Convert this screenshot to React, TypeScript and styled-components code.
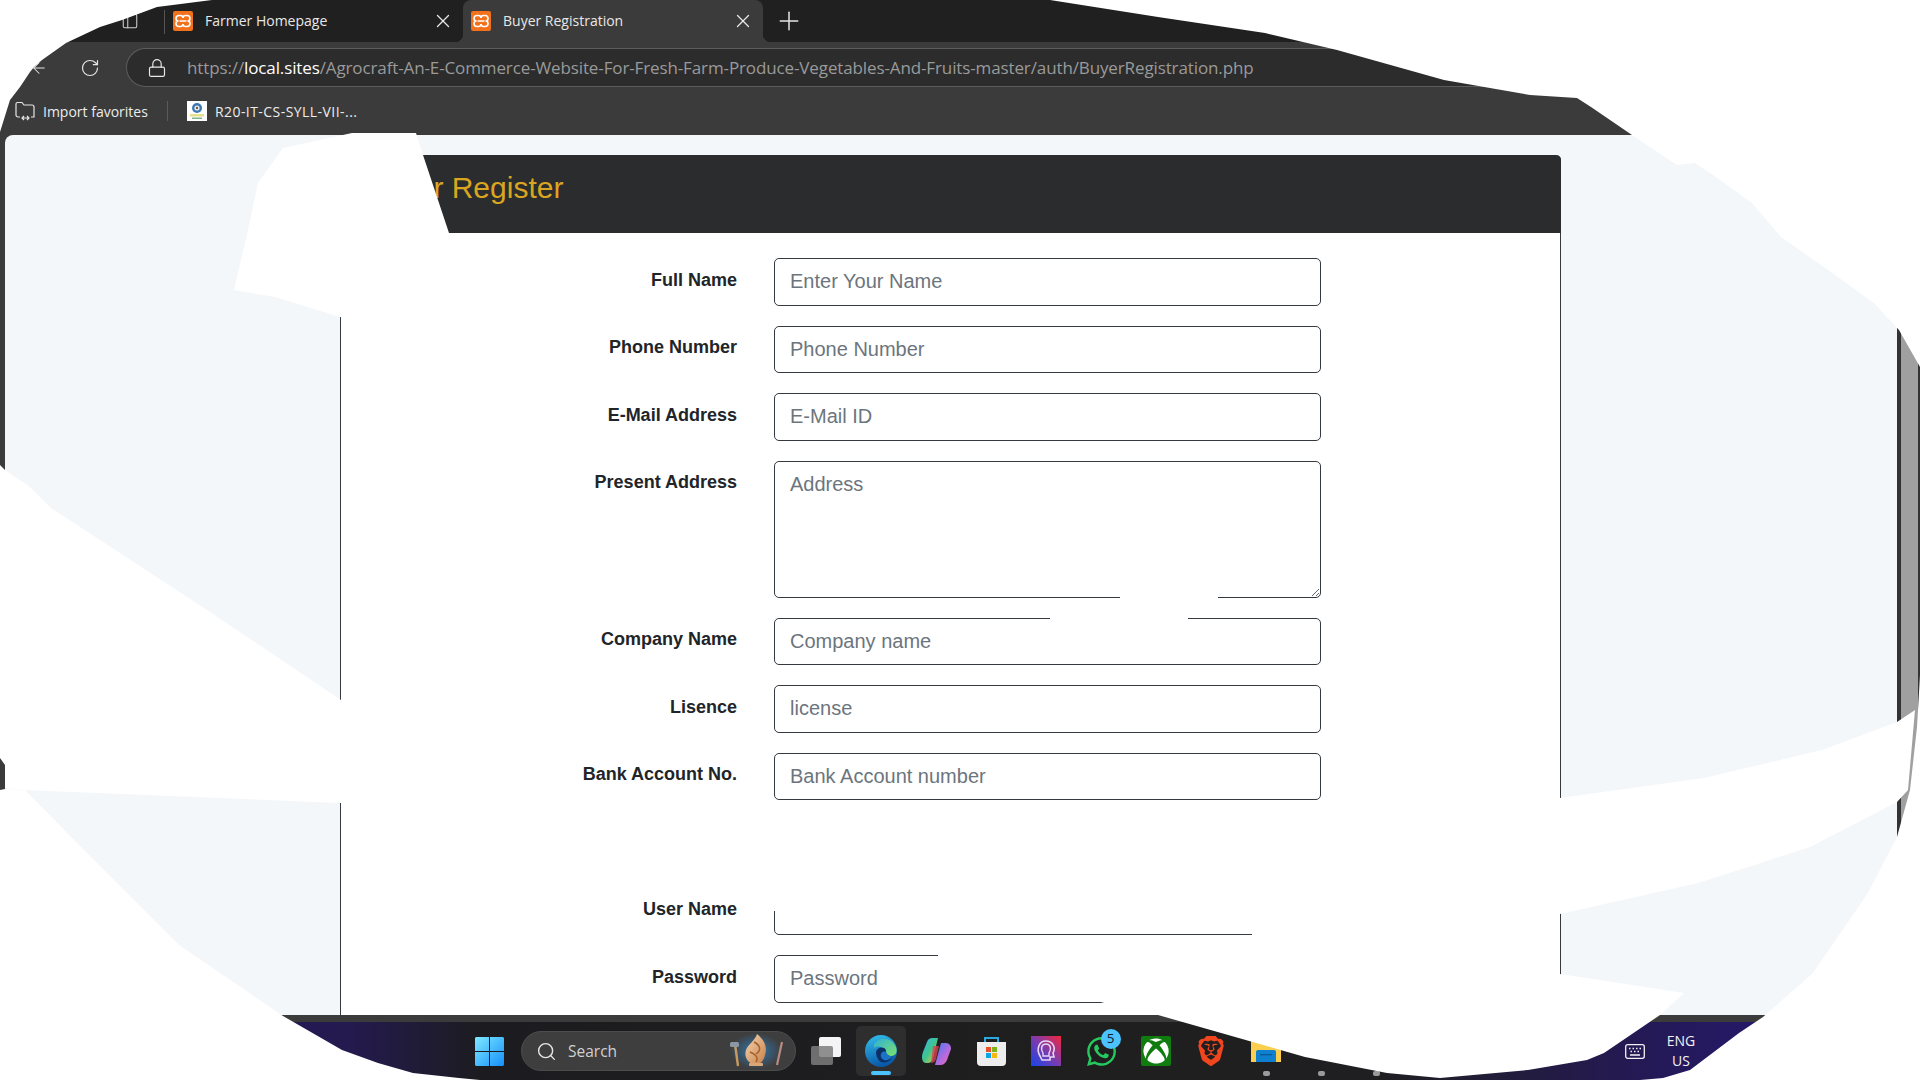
import React from "react";
import styled, { createGlobalStyle } from "styled-components";
import { ArrowLeft, Lock, PanelLeft, Plus, RotateCw, Search, Wifi, X } from "lucide-react";
import { FaWhatsapp, FaXbox } from "react-icons/fa";
import { SiBrave } from "react-icons/si";

const Global = createGlobalStyle`
  html, body { margin: 0; padding: 0; background: #fff; }
  * { box-sizing: border-box; }
`;

const Screen = styled.div`
  position: relative;
  width: 1920px;
  height: 1080px;
  overflow: hidden;
  display: flex;
  flex-direction: column;
  background: #3b3b3b;
  font-family: "Open Sans", "Liberation Sans", sans-serif;
`;

const TabBar = styled.div`
  height: 42px;
  flex: none;
  display: flex;
  align-items: flex-end;
  padding-left: 121px;
  background: #202020;
  color: #e8e8e8;
`;

const SidebarButton = styled.div`
  height: 42px;
  width: 18px;
  display: flex;
  align-items: center;
  color: #d0d0d0;
`;

const TabDivider = styled.div`
  width: 1px;
  height: 24px;
  margin: 0 0 8px 25px;
  background: #555;
`;

const Tab = styled.div<{ $active?: boolean; $w: number }>`
  position: relative;
  width: ${(p) => p.$w}px;
  height: 42px;
  display: flex;
  align-items: center;
  padding: 0 9px 0 8px;
  background: ${(p) => (p.$active ? "#3b3b3b" : "transparent")};
  border-radius: 8px 8px 0 0;
  font-size: 14px;
  &::before, &::after {
    content: "";
    display: ${(p) => (p.$active ? "block" : "none")};
    position: absolute;
    bottom: 0;
    width: 8px;
    height: 8px;
  }
  &::before { left: -8px; background: radial-gradient(circle at 0 0, transparent 8px, #3b3b3b 8.5px); }
  &::after { right: -8px; background: radial-gradient(circle at 100% 0, transparent 8px, #3b3b3b 8.5px); }
`;

const TabTitle = styled.span`
  flex: 1;
  margin: 0 0 2px 12px;
  white-space: nowrap;
`;

const NewTab = styled.div`
  margin: 0 0 6px 11px;
  height: 30px;
  color: #e4e4e4;
`;

const Toolbar = styled.div`
  height: 45px;
  flex: none;
  display: flex;
  align-items: center;
  padding: 6px 0 0 30px;
  background: #3b3b3b;
  color: #e6e6e6;
`;

const NavIcon = styled.div<{ $w: number }>`
  width: ${(p) => p.$w}px;
  display: flex;
  align-items: center;
`;

const AddressBar = styled.div`
  flex: 1;
  height: 39px;
  display: flex;
  align-items: center;
  padding-left: 20px;
  background: #2c2c2c;
  border: 1px solid #5c5c5c;
  border-right: 0;
  border-radius: 20px 0 0 20px;
`;

const Url = styled.span`
  margin-left: 20px;
  font-size: 17px;
  letter-spacing: -0.12px;
  color: #9a9a9a;
  white-space: nowrap;
`;

const UrlHost = styled.span`
  color: #ffffff;
`;

const BookmarkBar = styled.div`
  height: 48px;
  flex: none;
  display: flex;
  align-items: center;
  padding-left: 15px;
  background: #3b3b3b;
  color: #ececec;
  font-size: 14px;
`;

const BookmarkLabel = styled.span<{ $spacing?: number }>`
  margin-left: 8px;
  letter-spacing: ${(p) => p.$spacing ?? 0}px;
  white-space: nowrap;
`;

const BookmarkDivider = styled.div`
  width: 1px;
  height: 20px;
  margin: 0 19px;
  background: #5a5a5a;
`;

const Main = styled.div`
  flex: 1;
  min-height: 0;
  display: flex;
  padding: 0 0 7px 5px;
  background: #3b3b3b;
`;

const PageView = styled.div`
  flex: 1;
  min-width: 0;
  overflow: hidden;
  padding: 20px 0 0 335px;
  background: #f4f7fa;
  border-radius: 8px 0 0 0;
`;

const Scrollbar = styled.div`
  width: 23px;
  flex: none;
  background: #a0a0a0;
  border-left: 4px solid #333;
  border-right: 2px solid #333;
`;

const Panel = styled.div`
  width: 1221px;
  min-height: 900px;
  background: #fff;
  border: 1px solid #343a40;
  border-top: 0;
  border-radius: 5px 5px 0 0;
  font-family: "Liberation Sans", Arial, sans-serif;
`;

const PanelHeader = styled.div`
  height: 78px;
  margin: 0 -1px;
  padding: 0 0 13px 25px;
  display: flex;
  align-items: center;
  background: #2b2c2e;
  border-radius: 5px 5px 0 0;
`;

const PanelTitle = styled.h1`
  margin: 0;
  font-size: 30px;
  font-weight: 400;
  color: #daa520;
`;

const Form = styled.div`
  display: grid;
  grid-template-columns: 396px 547px;
  column-gap: 37px;
  row-gap: 20px;
  padding-top: 25px;
`;

const FieldLabel = styled.label`
  padding-top: 8.5px;
  text-align: right;
  font-size: 18px;
  line-height: 27px;
  font-weight: 700;
  color: #212529;
`;

const controlCss = `
  display: block;
  width: 100%;
  margin: 0;
  padding: 7.5px 15px;
  font-family: "Liberation Sans", Arial, sans-serif;
  font-size: 20px;
  line-height: 30px;
  color: #495057;
  background: #fff;
  border: 1px solid #343a40;
  border-radius: 5px;
  outline: none;
  &::placeholder { color: #6c757d; opacity: 1; }
`;

const Input = styled.input`
  ${controlCss}
  height: 47.5px;
`;

const TextArea = styled.textarea`
  ${controlCss}
  height: 137px;
`;

const EmptyRow = styled.div`
  grid-column: 1 / 3;
  height: 47.5px;
`;

const Taskbar = styled.div`
  height: 58px;
  flex: none;
  display: flex;
  align-items: center;
  padding-left: 475px;
  background: linear-gradient(90deg, #241a5c 0%, #241a50 18%, #1c1c20 25%, #1f1f1f 60%, #1f1f22 72%, #241a50 84%, #25186a 92%);
  color: #f2f2f2;
`;

const StartIcon = styled.div`
  width: 29px;
  height: 29px;
  flex: none;
`;

const SearchPill = styled.div`
  width: 275px;
  height: 40px;
  flex: none;
  margin-left: 17px;
  padding: 0 6px 0 14px;
  display: flex;
  align-items: center;
  background: #3e3e3e;
  border: 1px solid #4c4c4c;
  border-radius: 20px;
  color: #d0d0d0;
  font-size: 15.5px;
`;

const SearchText = styled.span`
  flex: 1;
  margin-left: 11px;
`;

const Slot = styled.div<{ $active?: boolean }>`
  position: relative;
  width: 55px;
  height: 50px;
  flex: none;
  display: flex;
  align-items: center;
  justify-content: center;
  border-radius: 5px;
  &::before {
    content: "";
    display: ${(p) => (p.$active ? "block" : "none")};
    position: absolute;
    left: 2.5px;
    right: 2.5px;
    top: 0;
    bottom: 0;
    background: #2e2e2e;
    border-radius: 5px;
  }
  & > svg { position: relative; }
`;

const Slots = styled.div`
  margin-left: 2.5px;
  display: flex;
`;

const Underline = styled.span`
  position: absolute;
  left: 17.5px;
  bottom: 1px;
  width: 20px;
  height: 4px;
  background: #4cc2ff;
  border-radius: 2px;
`;

const RunDot = styled.span`
  position: absolute;
  left: 24px;
  bottom: 0px;
  width: 7px;
  height: 5px;
  background: #9a9a9a;
  border-radius: 2px;
`;

const Badge = styled.span`
  position: absolute;
  left: 27px;
  top: 3px;
  width: 20px;
  height: 20px;
  display: flex;
  align-items: center;
  justify-content: center;
  background: #4cc2ff;
  border-radius: 50%;
  color: #10202c;
  font-size: 13.5px;
  line-height: 1;
`;

const Tray = styled.div`
  margin-left: auto;
  padding-right: 181px;
  display: flex;
  align-items: center;
  color: #f2f2f2;
`;

const LangBox = styled.div`
  width: 60px;
  margin: 0 8px 0 6px;
  text-align: center;
  font-size: 14px;
  line-height: 20px;
`;

const XboxTile = styled.div`
  width: 30px;
  height: 30px;
  display: flex;
  align-items: center;
  justify-content: center;
  background: #107c10;
  border-radius: 2px;
  color: #fff;
`;

const Redactions = styled.svg`
  position: absolute;
  left: 0;
  top: 0;
  width: 1920px;
  height: 1080px;
  pointer-events: none;
`;

const XamppIcon = () => (
  <svg width="20" height="20" viewBox="0 0 20 20">
    <rect width="20" height="20" rx="2" fill="#f2711c" />
    <path
      d="M6 4.5 H7.5 Q10 4.5 10 7 Q10 4.5 12.5 4.5 H14 Q17 4.5 17 7.5 Q17 10 14.5 10 Q17 10 17 12.5 Q17 15.5 14 15.5 H12.5 Q10 15.5 10 13 Q10 15.5 7.5 15.5 H6 Q3 15.5 3 12.5 Q3 10 5.5 10 Q3 10 3 7.5 Q3 4.5 6 4.5 Z M6.5 10 H13.5"
      fill="none"
      stroke="#fff"
      strokeWidth="1.6"
    />
  </svg>
);

const ImportIcon = () => (
  <svg width="20" height="20" viewBox="0 0 20 20" fill="none" stroke="#e6e6e6" strokeWidth="1.2">
    <path d="M5 16 H3 a2 2 0 0 1 -2 -2 V3 a1.5 1.5 0 0 1 1.5 -1.5 H7 L9 4 H17 a2 2 0 0 1 2 2 V16 H16" />
    <path d="M7 17 H14 M9 15 L7 17 L9 19 M12 15 L14 17 L12 19" />
  </svg>
);

const CollegeIcon = () => (
  <svg width="20" height="20" viewBox="0 0 20 20">
    <rect width="20" height="20" fill="#fff" />
    <circle cx="10" cy="7" r="5" fill="#3c78b4" />
    <circle cx="10" cy="7" r="2.6" fill="#e8eef4" />
    <circle cx="10" cy="7" r="1.2" fill="#7a5b2e" />
    <rect x="3" y="13" width="14" height="2.5" fill="#e6e08a" />
    <rect x="5" y="16.5" width="10" height="1.5" fill="#7fb58a" />
  </svg>
);

const WindowsIcon = () => (
  <svg width="29" height="29" viewBox="0 0 29 29">
    <defs>
      <linearGradient id="win" x1="0" y1="0" x2="1" y2="1">
        <stop offset="0" stopColor="#7fe8ff" />
        <stop offset="1" stopColor="#1490fb" />
      </linearGradient>
    </defs>
    <path fill="url(#win)" d="M1 0 H14 V14 H0 V1 Z M15 0 H28 L29 1 V14 H15 Z M0 15 H14 V29 H1 L0 28 Z M15 15 H29 V28 L28 29 H15 Z" />
  </svg>
);

const BingBadge = () => (
  <svg width="60" height="36" viewBox="0 0 60 36">
    <defs>
      <radialGradient id="glow">
        <stop offset="0" stopColor="#2f80c0" stopOpacity="0.9" />
        <stop offset="1" stopColor="#2f80c0" stopOpacity="0" />
      </radialGradient>
      <linearGradient id="flame" x1="0" y1="0" x2="1" y2="1">
        <stop offset="0" stopColor="#f6d6b4" />
        <stop offset="1" stopColor="#c77f45" />
      </linearGradient>
    </defs>
    <ellipse cx="27" cy="18" rx="26" ry="18" fill="url(#glow)" />
    <path d="M28 1 C34 6 39 12 36 22 C35 27 32 30 30 31 H23 C18 28 15 23 17 17 C19 11 26 8 28 1 Z" fill="url(#flame)" />
    <path d="M25 9 C31 12 33 17 27 21 M21 19 C26 21 30 24 27 29" stroke="#a3602d" strokeWidth="1.5" fill="none" />
    <rect x="20" y="30" width="14" height="3" rx="1" fill="#d9a77a" />
    <path d="M6 11 L9 33" stroke="#c79a63" strokeWidth="2.4" />
    <rect x="1" y="9" width="9" height="5" rx="1.5" fill="#8b97a3" />
    <path d="M53 9 L48 32" stroke="#b98a80" strokeWidth="2.2" />
  </svg>
);

const TaskViewIcon = () => (
  <svg width="30" height="28" viewBox="0 0 30 28">
    <rect x="8" y="0" width="22" height="20" rx="2" fill="#f4f4f4" />
    <rect x="0" y="9" width="22" height="19" rx="2" fill="#7d7d7d" fillOpacity="0.85" />
  </svg>
);

const EdgeIcon = () => (
  <svg width="32" height="32" viewBox="0 0 32 32">
    <defs>
      <linearGradient id="edgeBlue" x1="0" y1="0" x2="0.3" y2="1">
        <stop offset="0" stopColor="#33c2ee" />
        <stop offset="1" stopColor="#0b5aa8" />
      </linearGradient>
      <linearGradient id="edgeGreen" x1="0" y1="0" x2="1" y2="1">
        <stop offset="0" stopColor="#2fb0d8" />
        <stop offset="1" stopColor="#7ce26a" />
      </linearGradient>
    </defs>
    <circle cx="16" cy="16" r="16" fill="url(#edgeBlue)" />
    <path d="M9 9 C14 1 27 2 31 12 C33 18 30 21 25 21 C21 21 19 19 20 16 C19 12 13 10 9 13 Z" fill="url(#edgeGreen)" />
    <path d="M11 17 C12 12 19 11 21 15 C20 18 23 22 28 21 C25 28 16 30 13 24 C12 22 11 20 11 17 Z" fill="#0c2f68" />
    <path d="M16 19 C17 16 19 16 21 17 C22 20 25 22 28 21 C26 24 22 26 19 25 C17 24 15 22 16 19 Z" fill="#1a73c4" />
  </svg>
);

const CopilotIcon = () => (
  <svg width="29" height="27" viewBox="0 0 29 27">
    <defs>
      <linearGradient id="copA" x1="0" y1="0" x2="1" y2="1">
        <stop offset="0" stopColor="#35b6f2" />
        <stop offset="0.5" stopColor="#3fc48c" />
        <stop offset="1" stopColor="#f7c83e" />
      </linearGradient>
      <linearGradient id="copB" x1="0" y1="0" x2="1" y2="1">
        <stop offset="0" stopColor="#3e7bf2" />
        <stop offset="0.6" stopColor="#b86adf" />
        <stop offset="1" stopColor="#f56f9b" />
      </linearGradient>
    </defs>
    <path d="M10 0 H16 L11 20 C10 25 7 25 4 25 C0 25 -1 19 1 14 L5 4 C6 1 8 0 10 0 Z" fill="url(#copA)" />
    <path d="M13 27 H19 C22 27 24 24 25 22 L29 11 C29 6 26 5 23 5 H19 L13 27 Z" fill="url(#copB)" />
    <path d="M11 8 H17 L14 21 C13 24 11 25 9 25 Z" fill="#d7414f" fillOpacity="0.8" />
  </svg>
);

const StoreIcon = () => (
  <svg width="29" height="30" viewBox="0 0 29 30">
    <path d="M8 6 V2 H21 V6" fill="none" stroke="#2aa8e0" strokeWidth="2" />
    <path d="M0 6 H29 V26 a4 4 0 0 1 -4 4 H4 a4 4 0 0 1 -4 -4 Z" fill="#ededed" />
    <rect x="9" y="11" width="5" height="5" fill="#e8512a" />
    <rect x="15" y="11" width="5" height="5" fill="#7fb11b" />
    <rect x="9" y="17" width="5" height="5" fill="#10a4e8" />
    <rect x="15" y="17" width="5" height="5" fill="#f9b80d" />
  </svg>
);

const ProtonIcon = () => (
  <svg width="30" height="30" viewBox="0 0 30 30">
    <defs>
      <linearGradient id="proton" x1="0" y1="1" x2="1" y2="0">
        <stop offset="0" stopColor="#1546ea" />
        <stop offset="0.5" stopColor="#7b3bb0" />
        <stop offset="1" stopColor="#f2273c" />
      </linearGradient>
    </defs>
    <rect width="30" height="30" fill="url(#proton)" />
    <path d="M9 20 C5 13 8 5 15 5 C22 5 25 12 22 17 L23 21 H19 V24 H11 Z" fill="none" stroke="#e8d5f2" strokeWidth="1.6" />
    <path d="M12 17 C9 12 11 8 15 8 C19 8 21 12 18 17 V20 H12 Z" fill="none" stroke="#e8d5f2" strokeWidth="1.4" />
  </svg>
);

const FolderIcon = () => (
  <svg width="30" height="22" viewBox="0 0 30 22">
    <rect width="30" height="22" fill="#fcce4f" />
    <path d="M5 22 V12 a2 2 0 0 1 2 -2 H23 a2 2 0 0 1 2 2 V22 Z" fill="#0f80cf" />
    <rect x="9" y="14" width="12" height="1.4" fill="#0a5b99" />
  </svg>
);

const KeyboardIcon = () => (
  <svg width="20" height="15" viewBox="0 0 20 15" fill="none">
    <rect x="0.7" y="0.7" width="18.6" height="13.6" rx="2" stroke="#f2f2f2" strokeWidth="1.3" />
    <path d="M4 4.5 H5.5 M7.5 4.5 H9 M11 4.5 H12.5 M14.5 4.5 H16 M5.5 7.5 H7 M9 7.5 H10.5 M12.5 7.5 H14 M5 11 H15" stroke="#f2f2f2" strokeWidth="1.4" />
  </svg>
);

const Redaction = () => (
  <Redactions viewBox="0 0 1920 1080" fill="#fff">
    <path d="M0 0 L212 0 L157 7 L122 20 L100 27 L66 43 L42 60 L34 67 L30 72 L20 87 L10 100 L0 132 Z" />
    <path d="M950 0 L1050 0 L1158 17 L1265 33 L1337 50 L1444 80 L1530 95 L1577 98 L1591 107 L1632 135 L1677 165 L1695 163 L1716 177 L1752 203 L1781 237 L1824 267 L1874 303 L1899 330 L1920 367 L1920 0 Z" />
    <path d="M352 133 L416 133 L423 155 L449 233 L449 236 L345 318 L340 317 L275 297 L234 290 L248 230 L258 183 L283 148 Z" />
    <path d="M0 465 L5 470 L30 487 L51 508 L204 608 L341 700 L341 803 L25 790 L5 788 L5 765 L0 758 Z" />
    <path d="M0 790 L5 789 L25 790 L77 843 L179 945 L283 1016 L342 1050 L378 1063 L413 1073 L459 1078 L480 1080 L0 1080 Z" />
    <path d="M1120 594 L1218 594 L1218 601 L1188 612 L1188 621 L1050 621 L1050 612 L1120 601 Z" />
    <path d="M772 803 L1330 801 L1560 798 L1704 778 L1822 750 L1897 722 L1915 710 L1908 790 L1897 802 L1810 847 L1698 883 L1560 914 L1330 940 L1560 974 L1684 993 L1660 1015 L1604 1053 L1587 1060 L1528 1070 L1440 1078 L1387 1073 L1305 1057 L1158 1015 L1108 1004 L938 958 L938 937 L1252 937 L1252 930 L805 922 L802 918 L790 918 L786 911 L772 911 Z" />
    <path d="M1920 675 L1917 727 L1910 790 L1897 837 L1868 893 L1813 973 L1763 1017 L1739 1033 L1690 1070 L1663 1078 L1640 1080 L1920 1080 Z" />
  </Redactions>
);

const fields = [
  ["Full Name", "Enter Your Name"],
  ["Phone Number", "Phone Number"],
  ["E-Mail Address", "E-Mail ID"],
  ["Present Address", "Address", "area"],
  ["Company Name", "Company name"],
  ["Lisence", "license"],
  ["Bank Account No.", "Bank Account number"],
  ["", "", "gap"],
  ["User Name", "User Name"],
  ["Password", "Password"],
];

export default function App() {
  return (
    <Screen>
      <Global />
      <TabBar>
        <SidebarButton>
          <PanelLeft size={18} strokeWidth={1.4} />
        </SidebarButton>
        <TabDivider />
        <Tab $w={298}>
          <XamppIcon />
          <TabTitle>Farmer Homepage</TabTitle>
          <X size={22} strokeWidth={1.4} />
        </Tab>
        <Tab $w={300} $active>
          <XamppIcon />
          <TabTitle>Buyer Registration</TabTitle>
          <X size={22} strokeWidth={1.4} />
        </Tab>
        <NewTab>
          <Plus size={30} strokeWidth={1.2} />
        </NewTab>
      </TabBar>
      <Toolbar>
        <NavIcon $w={50}>
          <ArrowLeft size={18} strokeWidth={1.4} />
        </NavIcon>
        <NavIcon $w={46}>
          <RotateCw size={20} strokeWidth={1.4} />
        </NavIcon>
        <AddressBar>
          <Lock size={20} strokeWidth={1.4} color="#e8e8e8" />
          <Url>
            https://<UrlHost>local.sites</UrlHost>/Agrocraft-An-E-Commerce-Website-For-Fresh-Farm-Produce-Vegetables-And-Fruits-master/auth/BuyerRegistration.php
          </Url>
        </AddressBar>
      </Toolbar>
      <BookmarkBar>
        <ImportIcon />
        <BookmarkLabel>Import favorites</BookmarkLabel>
        <BookmarkDivider />
        <CollegeIcon />
        <BookmarkLabel $spacing={0.45}>R20-IT-CS-SYLL-VII-...</BookmarkLabel>
      </BookmarkBar>
      <Main>
        <PageView>
          <Panel>
            <PanelHeader>
              <PanelTitle>Buyer Register</PanelTitle>
            </PanelHeader>
            <Form>
              {fields.map(([label, hint, kind]) =>
                kind === "gap" ? (
                  <EmptyRow key="gap" />
                ) : (
                  <React.Fragment key={label}>
                    <FieldLabel>{label}</FieldLabel>
                    {kind === "area" ? (
                      <TextArea placeholder={hint} readOnly />
                    ) : (
                      <Input placeholder={hint} readOnly type={label === "Password" ? "password" : "text"} />
                    )}
                  </React.Fragment>
                )
              )}
            </Form>
          </Panel>
        </PageView>
        <Scrollbar />
      </Main>
      <Taskbar>
        <StartIcon>
          <WindowsIcon />
        </StartIcon>
        <SearchPill>
          <Search size={21} strokeWidth={1.6} color="#e6e6e6" />
          <SearchText>Search</SearchText>
          <BingBadge />
        </SearchPill>
        <Slots>
          <Slot>
            <TaskViewIcon />
          </Slot>
          <Slot $active>
            <EdgeIcon />
            <Underline />
          </Slot>
          <Slot>
            <CopilotIcon />
          </Slot>
          <Slot>
            <StoreIcon />
          </Slot>
          <Slot>
            <ProtonIcon />
          </Slot>
          <Slot>
            <FaWhatsapp size={33} color="#25c95e" />
            <Badge>5</Badge>
          </Slot>
          <Slot>
            <XboxTile>
              <FaXbox size={26} />
            </XboxTile>
          </Slot>
          <Slot>
            <SiBrave size={30} color="#f1451d" />
          </Slot>
          <Slot>
            <FolderIcon />
            <RunDot />
          </Slot>
          <Slot>
            <RunDot />
          </Slot>
          <Slot>
            <RunDot />
          </Slot>
        </Slots>
        <Tray>
          <KeyboardIcon />
          <LangBox>
            ENG
            <br />
            US
          </LangBox>
          <Wifi size={20} strokeWidth={1.6} />
        </Tray>
      </Taskbar>
      <Redaction />
    </Screen>
  );
}
